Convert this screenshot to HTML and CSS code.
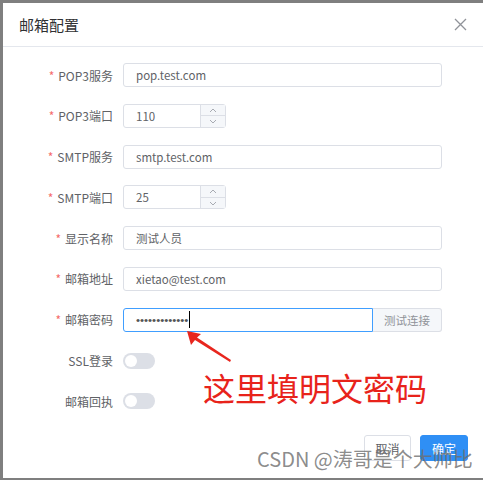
FILE: index.html
```html
<!DOCTYPE html>
<html lang="zh">
<head>
<meta charset="utf-8">
<title>邮箱配置</title>
<link rel="stylesheet" href="styles.css">
</head>
<body>
<div class="dialog">
  <div class="header">
    <span class="title">邮箱配置</span>
    <svg class="close" width="13" height="13" viewBox="0 0 13 13"><path d="M1 1L12 12M12 1L1 12" stroke="#909399" stroke-width="1.3" fill="none"/></svg>
  </div>
  <div class="form">
    <div class="row"><label class="label"><span class="req">*</span>POP3服务</label><div class="input wide">pop.test.com</div></div>
    <div class="row"><label class="label"><span class="req">*</span>POP3端口</label>
      <div class="number"><span class="num-val">110</span>
        <div class="steps">
          <span class="step"><svg width="8" height="5" viewBox="0 0 8 5"><path d="M1 4L4 1L7 4" stroke="#a8abb2" fill="none"/></svg></span>
          <span class="step"><svg width="8" height="5" viewBox="0 0 8 5"><path d="M1 1L4 4L7 1" stroke="#a8abb2" fill="none"/></svg></span>
        </div>
      </div>
    </div>
    <div class="row"><label class="label"><span class="req">*</span>SMTP服务</label><div class="input wide">smtp.test.com</div></div>
    <div class="row"><label class="label"><span class="req">*</span>SMTP端口</label>
      <div class="number"><span class="num-val">25</span>
        <div class="steps">
          <span class="step"><svg width="8" height="5" viewBox="0 0 8 5"><path d="M1 4L4 1L7 4" stroke="#a8abb2" fill="none"/></svg></span>
          <span class="step"><svg width="8" height="5" viewBox="0 0 8 5"><path d="M1 1L4 4L7 1" stroke="#a8abb2" fill="none"/></svg></span>
        </div>
      </div>
    </div>
    <div class="row"><label class="label"><span class="req">*</span>显示名称</label><div class="input wide">测试人员</div></div>
    <div class="row"><label class="label"><span class="req">*</span>邮箱地址</label><div class="input wide">xietao@test.com</div></div>
    <div class="row"><label class="label"><span class="req">*</span>邮箱密码</label>
      <div class="group">
        <div class="input pwd"><span class="dots">•••••••••••••</span><span class="caret"></span></div>
        <div class="append">测试连接</div>
      </div>
    </div>
    <div class="row"><label class="label">SSL登录</label><span class="switch"><span class="knob"></span></span></div>
    <div class="row"><label class="label">邮箱回执</label><span class="switch"><span class="knob"></span></span></div>
  </div>
  <div class="footer">
    <button class="btn">取消</button>
    <button class="btn primary">确定</button>
  </div>
  <svg class="arrow" width="60" height="45" viewBox="0 0 60 45"><polygon points="3,2 17,5 13,8.5 47,31 46,33 11,11 7,16" fill="#e8261e"/></svg>
  <div class="note">这里填明文密码</div>
  <div class="watermark">CSDN @涛哥是个大帅比</div>
</div>
</body>
</html>
```
FILE: styles.css
```css
html, body {
  margin: 0;
  padding: 0;
  background: #7f7f7f;
  height: 480px;
  overflow: hidden;
}
body {
  padding: 3px 0 0 3px;
  box-sizing: border-box;
  font-family: "Noto Sans CJK SC", "Noto Sans", sans-serif;
}
.dialog {
  position: relative;
  width: 480px;
  height: 475px;
  background: #fff;
  box-sizing: border-box;
}
.header {
  height: 43px;
  border-bottom: 1px solid #e4e7ed;
  display: flex;
  align-items: center;
  justify-content: space-between;
  padding: 0 16px 0 16px;
}
.title {
  font-size: 15px;
  color: #303133;
}
.form {
  padding-top: 16px;
  display: flex;
  flex-direction: column;
  gap: 16.8px;
}
.row {
  display: flex;
  align-items: center;
  height: 24px;
}
.label {
  width: 110px;
  padding-right: 10px;
  text-align: right;
  font-size: 12px;
  color: #606266;
}
.req {
  color: #f56c6c;
  margin-right: 4px;
}
.input {
  height: 24px;
  box-sizing: border-box;
  border: 1px solid #dcdfe6;
  border-radius: 3px;
  display: flex;
  align-items: center;
  padding-left: 12px;
  font-size: 11.5px;
  color: #606266;
}
.wide {
  width: 319px;
}
.number {
  width: 103px;
  height: 24px;
  box-sizing: border-box;
  border: 1px solid #dcdfe6;
  border-radius: 3px;
  display: flex;
  align-items: center;
  font-size: 11.5px;
  color: #606266;
}
.num-val {
  flex: 1;
  padding-left: 12px;
}
.steps {
  width: 24px;
  height: 100%;
  border-left: 1px solid #dcdfe6;
  background: #f5f7fa;
  display: flex;
  flex-direction: column;
}
.step {
  flex: 1;
  display: flex;
  align-items: center;
  justify-content: center;
}
.step + .step {
  border-top: 1px solid #dcdfe6;
}
.group {
  display: flex;
  width: 319px;
  height: 24px;
}
.pwd {
  width: 250px;
  border-color: #409eff;
  border-radius: 3px 0 0 3px;
  padding-left: 12px;
}
.dots {
  font-family: "Liberation Sans", sans-serif;
  font-size: 11.5px;
  color: #555;
}
.caret {
  width: 1px;
  height: 17px;
  background: #000;
  margin-left: 1px;
}
.append {
  flex: 1;
  height: 24px;
  box-sizing: border-box;
  border: 1px solid #dcdfe6;
  border-left: none;
  border-radius: 0 3px 3px 0;
  background: #f5f7fa;
  color: #909399;
  font-size: 11.5px;
  display: flex;
  align-items: center;
  justify-content: center;
}
.switch {
  width: 32px;
  height: 16px;
  border-radius: 8px;
  background: #dcdfe6;
  display: flex;
  align-items: center;
  padding-left: 2px;
  box-sizing: border-box;
}
.knob {
  width: 12px;
  height: 12px;
  border-radius: 50%;
  background: #fff;
}
.footer {
  display: flex;
  justify-content: flex-end;
  gap: 9px;
  padding: 22px 15px 0 0;
}
.btn {
  height: 26px;
  width: 47px;
  box-sizing: border-box;
  border: 1px solid #dcdfe6;
  border-radius: 3px;
  background: #fff;
  color: #606266;
  font-size: 12px;
  font-family: inherit;
  padding: 0;
}
.btn.primary {
  width: 48px;
  background: #2f8ff5;
  border-color: #2f8ff5;
  color: #fff;
}
.arrow {
  position: absolute;
  left: 181px;
  top: 326px;
}
.note {
  position: absolute;
  left: 200px;
  top: 362px;
  font-size: 32px;
  line-height: 44px;
  color: #e8231b;
  white-space: nowrap;
}
.watermark {
  position: absolute;
  left: 254px;
  top: 442px;
  font-size: 20px;
  line-height: 28px;
  color: rgba(110, 110, 110, 0.8);
  white-space: nowrap;
}
```
